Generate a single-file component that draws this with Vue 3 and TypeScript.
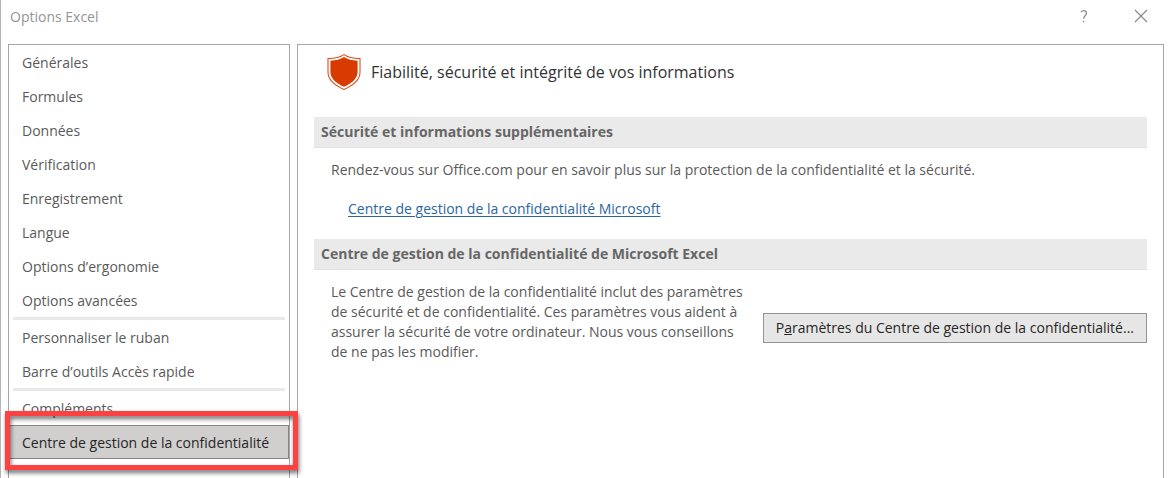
<script setup lang="ts">
import { ref } from 'vue'

const groups: string[][] = [
  [
    'Générales',
    'Formules',
    'Données',
    'Vérification',
    'Enregistrement',
    'Langue',
    'Options d’ergonomie',
    'Options avancées',
  ],
  ['Personnaliser le ruban', 'Barre d’outils Accès rapide'],
  ['Compléments', 'Centre de gestion de la confidentialité'],
]

const selected = ref('Centre de gestion de la confidentialité')
</script>

<template>
  <div class="dialog">
    <header class="titlebar">
      <h1 class="title">Options Excel</h1>
      <button class="tool" type="button" aria-label="Aide">
        <svg width="8" height="13" viewBox="0 0 8 13" fill="none" stroke="#8c8c8c" stroke-width="1.3">
          <path d="M1 2.2C1.8 1 2.8.7 3.8.7C5.6.7 6.5 1.8 6.5 3.2C6.5 5.9 3.6 5.7 3.6 8.7" />
          <path d="M2.8 11.5H4.3" />
        </svg>
      </button>
      <button class="tool" type="button" aria-label="Fermer">
        <svg width="14" height="14" viewBox="0 0 14 14" fill="none" stroke="#858585" stroke-width="1.1">
          <path d="M1 1L13 13M13 1L1 13" />
        </svg>
      </button>
    </header>

    <div class="body">
      <nav class="sidebar" aria-label="Catégories">
        <ul v-for="(group, g) in groups" :key="g" class="group">
          <li v-for="item in group" :key="item" class="entry">
            <button
              type="button"
              class="item"
              :class="{ active: item === selected }"
              @click="selected = item"
            >
              {{ item }}
            </button>
            <span v-if="item === selected" class="marker"></span>
          </li>
        </ul>
      </nav>

      <main class="content">
        <div class="intro">
          <svg class="shield" width="34" height="36" viewBox="0 0 34 36">
            <path
              d="M17 .6C20 2.7 25 4.4 33 4.6V18C33 25.6 26 31.6 17 35.4C8 31.6 1 25.6 1 18V4.6C9 4.4 14 2.7 17 .6Z"
              fill="#fff"
              stroke="#dc4f22"
              stroke-width="1.1"
            />
            <path
              d="M17 3.1C20.6 5.4 25 6.6 30.6 6.8V18C30.6 24.3 25 29.2 17 32.8C9 29.2 3.4 24.3 3.4 18V6.8C9 6.6 13.4 5.4 17 3.1Z"
              fill="#d83b01"
            />
          </svg>
          <p class="headline">Fiabilité, sécurité et intégrité de vos informations</p>
        </div>

        <h2 class="section">Sécurité et informations supplémentaires</h2>
        <p class="text">
          Rendez-vous sur Office.com pour en savoir plus sur la protection de la confidentialité et la sécurité.
        </p>
        <p class="links"><a href="#">Centre de gestion de la confidentialité Microsoft</a></p>

        <h2 class="section">Centre de gestion de la confidentialité de Microsoft Excel</h2>
        <div class="settings">
          <p class="text">
            Le Centre de gestion de la confidentialité inclut des paramètres<br />
            de sécurité et de confidentialité. Ces paramètres vous aident à<br />
            assurer la sécurité de votre ordinateur. Nous vous conseillons<br />
            de ne pas les modifier.
          </p>
          <button class="push" type="button">
            P<u>a</u>ramètres du Centre de gestion de la confidentialité...
          </button>
        </div>
      </main>
    </div>
  </div>
</template>

<style>
body {
  margin: 0;
  background: #fff;
}
</style>

<style scoped>
.dialog {
  box-sizing: border-box;
  min-height: 100vh;
  display: flex;
  flex-direction: column;
  padding: 0 7px;
  border-left: 1px solid #b4b4b4;
  background: #fff;
  color: #5a5a5a;
  font: 14px/20px "Segoe UI", "Open Sans", "Noto Sans", sans-serif;
  overflow: hidden;
}
h1,
h2,
p,
ul {
  margin: 0;
  padding: 0;
  font-weight: 400;
}
button {
  font: inherit;
  margin: 0;
}
.titlebar {
  height: 44px;
  display: flex;
  align-items: flex-start;
}
.title {
  flex: 1;
  padding: 7px 2px;
  font-size: 14px;
  line-height: 20px;
  color: #959595;
}
.tool {
  width: 57px;
  height: 32px;
  padding: 0;
  border: 0;
  background: none;
  display: flex;
  align-items: center;
  justify-content: center;
}
.tool:last-child {
  margin-right: -5px;
}
.body {
  flex: 1;
  display: flex;
  gap: 7px;
}
.sidebar,
.content {
  box-sizing: border-box;
  border: 1px solid #a6a6a6;
  border-bottom: 0;
}
.sidebar {
  flex: 0 0 282px;
}
.group {
  list-style: none;
}
.group + .group::before {
  content: "";
  display: block;
  height: 3px;
  margin: 0 4px;
  background: #e9e9e9;
}
.entry {
  position: relative;
}
.item {
  box-sizing: border-box;
  display: block;
  width: 100%;
  height: 34px;
  padding: 2px 12px 0;
  border: 1px solid transparent;
  background: none;
  color: inherit;
  text-align: left;
  white-space: nowrap;
}
.item.active {
  border-color: #858585;
  background: #d0cfce;
  color: #262626;
}
.marker {
  position: absolute;
  inset: -14px -9px -11px -4px;
  border: 5px solid #ff4141;
  filter: drop-shadow(1px 3px 2px rgba(0, 0, 0, 0.55));
  pointer-events: none;
}
.content {
  flex: 1;
  min-width: 0;
  padding: 0 16px;
}
.intro {
  display: flex;
  align-items: center;
  gap: 10px;
  height: 54px;
  margin-bottom: 18px;
  padding-left: 13px;
}
.headline {
  font-size: 16px;
  line-height: 24px;
  color: #333;
}
.section {
  box-sizing: border-box;
  height: 31px;
  padding: 5px 7px;
  border-bottom: 1px solid #e1e1e1;
  background: #eaeaea;
  color: #666;
  font-size: 14px;
  line-height: 20px;
  font-weight: 700;
}
.text {
  padding: 12px 0 0 17px;
}
.links {
  padding: 19px 34px 20px;
}
.links a {
  color: #2b669f;
  text-underline-offset: 2px;
}
.settings {
  display: flex;
  justify-content: space-between;
  align-items: center;
}
.push {
  height: 30px;
  margin-top: 24px;
  padding: 0 12px;
  border: 1px solid #959595;
  background: #e6e6e6;
  color: #262626;
  white-space: nowrap;
}
</style>
